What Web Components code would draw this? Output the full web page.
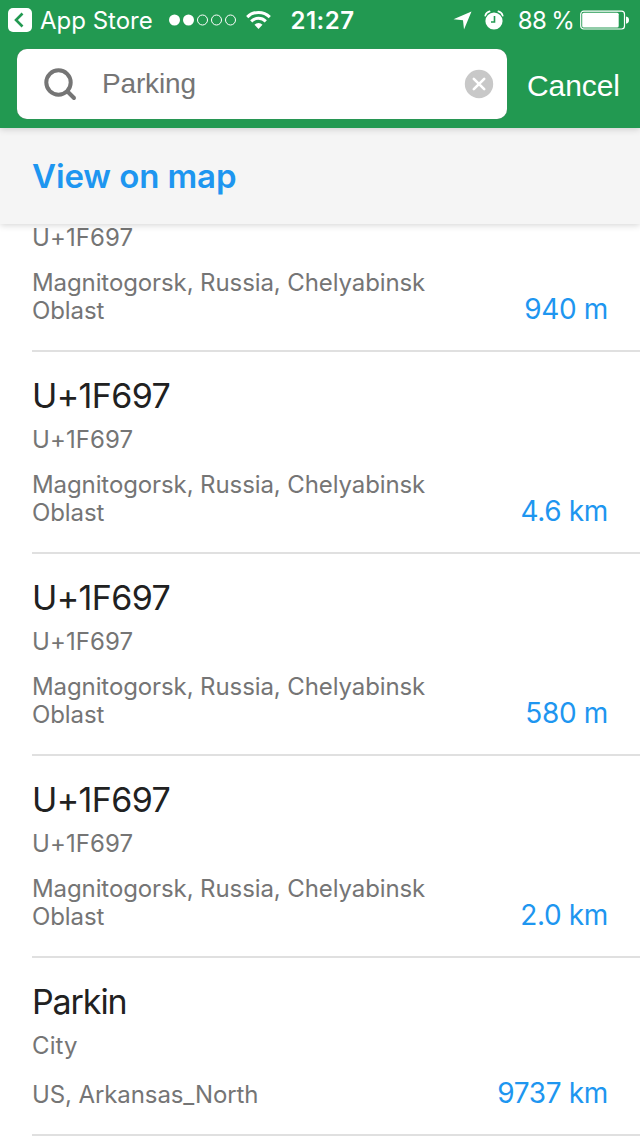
<!DOCTYPE html>
<html lang="en">
<head>
<meta charset="utf-8">
<meta name="viewport" content="width=640">
<title>Search results</title>
<style>
  body {
    margin: 0;
    background: #fff;
    font-family: Inter, "Liberation Sans", sans-serif;
    -webkit-font-smoothing: antialiased;
  }
</style>
</head>
<body>
<search-screen></search-screen>

<script>
class StatusBar extends HTMLElement {
  connectedCallback() {
    this.attachShadow({ mode: "open" });
    this.shadowRoot.innerHTML = `
      <style>
        :host {
          display: flex;
          align-items: center;
          height: 40px;
          color: #fff;
          font-size: 24px;
          line-height: 38px;
          white-space: nowrap;
        }
        svg { display: block; flex: none; }
        span { padding-top: 2px; }
        .side { display: flex; align-items: center; flex: 1; }
        .left { padding-left: 8px; }
        .right { justify-content: flex-end; padding-right: 11px; }
        .app { margin-left: 8px; width: 112px; letter-spacing: 0; }
        .signal { margin-left: 17px; }
        .wifi { margin-left: 9px; }
        .time { font-weight: 600; letter-spacing: 0.5px; margin-left: 8px; }
        .alarm { margin-left: 12px; }
        .percent { margin-left: 14px; margin-right: 6px; word-spacing: -1px; letter-spacing: -0.7px; }
      </style>

      <div class="side left">
        <svg width="24" height="24" viewBox="0 0 24 24">
          <rect width="24" height="24" rx="5" fill="#fff"/>
          <path d="M14.500 5.500L8 12l6.500 6.500" fill="none" stroke="#229951" stroke-width="2.600"/>
        </svg>
        <span class="app">App Store</span>
        <svg class="signal" width="68" height="12" viewBox="0 0 68 12">
          <g fill="#fff">
            <circle cx="5.500" cy="6" r="5.500"/>
            <circle cx="19.500" cy="6" r="5.500"/>
          </g>
          <g fill="none" stroke="#fff">
            <circle cx="33.500" cy="6" r="5"/>
            <circle cx="47.500" cy="6" r="5"/>
            <circle cx="61.500" cy="6" r="5"/>
          </g>
        </svg>
        <svg class="wifi" width="25" height="20" viewBox="0 0 25 20">
          <g fill="none" stroke="#fff" stroke-width="3">
            <path d="M1.200 7.100a16 16 0 0 1 22.600 0"/>
            <path d="M5.200 11.400a10.300 10.300 0 0 1 14.600 0"/>
          </g>
          <path d="M12.500 19l-4-4.200a5.600 5.600 0 0 1 8 0z" fill="#fff"/>
        </svg>
      </div>

      <span class="time">21:27</span>

      <div class="side right">
        <svg width="19" height="19" viewBox="0 0 19 19">
          <path d="M18.500 0.500L11 18.500L10 9.200L0.500 8.300z" fill="#fff"/>
        </svg>
        <svg class="alarm" width="20" height="20" viewBox="0 0 20 20">
          <circle cx="10" cy="11" r="8.600" fill="#fff"/>
          <g fill="none" stroke="#fff" stroke-width="1.700" stroke-linecap="round">
            <path d="M1.300 5.600Q2.200 2.200 5.600 1.400"/>
            <path d="M18.700 5.600Q17.800 2.200 14.400 1.400"/>
          </g>
          <path d="M10.500 6v6H7" fill="none" stroke="#229951" stroke-width="1.600"/>
        </svg>
        <span class="percent">88 %</span>
        <svg width="49" height="20" viewBox="0 0 49 20">
          <rect x="0.700" y="1.200" width="43.800" height="17.800" rx="3" fill="none" stroke="#fff" stroke-width="1.200"/>
          <rect x="2.200" y="2.700" width="36.500" height="14.800" rx="1.500" fill="#fff"/>
          <path d="M46 6.500c2 0.300 3 1.500 3 3.600s-1 3.300-3 3.600z" fill="#fff"/>
        </svg>
      </div>
    `;
  }
}

class SearchField extends HTMLElement {
  connectedCallback() {
    this.attachShadow({ mode: "open" });
    this.shadowRoot.innerHTML = `
      <style>
        :host {
          display: flex;
          align-items: center;
          width: 490px;
          height: 70px;
          box-sizing: border-box;
          padding: 0 13px 0 27px;
          border-radius: 10px;
          background: #fff;
          box-shadow: 0 0 1px #6b7a70;
          font-family: "Liberation Sans", sans-serif;
          font-size: 28px;
          line-height: 36px;
          color: #757575;
        }
        svg { flex: none; }
        .query { flex: 1; margin-left: 25px; letter-spacing: -0.15px; padding-bottom: 1px; }
      </style>
      <svg width="33" height="33" viewBox="0 0 33 33">
        <circle cx="14.500" cy="14.500" r="12.200" fill="none" stroke="#757575" stroke-width="4"/>
        <path d="M23.500 23.500L30 30" stroke="#757575" stroke-width="4" stroke-linecap="round"/>
      </svg>
      <span class="query"><slot></slot></span>
      <svg width="30" height="30" viewBox="0 0 30 30">
        <circle cx="15" cy="15" r="14.200" fill="#c8c8c8"/>
        <path d="M9.800 9.800l10.400 10.400M20.200 9.800L9.800 20.200" stroke="#fff" stroke-width="2.600" stroke-linecap="round"/>
      </svg>
    `;
  }
}

class SearchHeader extends HTMLElement {
  connectedCallback() {
    this.attachShadow({ mode: "open" });
    this.shadowRoot.innerHTML = `
      <style>
        :host {
          display: block;
          height: 128px;
          background: #229951;
          box-shadow: 0 1px 7px rgba(0, 0, 0, 0.18);
          position: relative;
          z-index: 2;
        }
        .row {
          display: flex;
          align-items: center;
          padding: 9px 16px 0 17px;
        }
        .cancel {
          margin-left: 20px;
          padding-top: 4px;
          font-family: "Liberation Sans", sans-serif;
          font-size: 30px;
          line-height: 36px;
          letter-spacing: -0.1px;
          color: #fff;
        }
      </style>
      <status-bar></status-bar>
      <div class="row">
        <search-field><slot></slot></search-field>
        <span class="cancel">Cancel</span>
      </div>
    `;
  }
}

class MapLink extends HTMLElement {
  connectedCallback() {
    this.attachShadow({ mode: "open" });
    this.shadowRoot.innerHTML = `
      <style>
        :host {
          display: flex;
          align-items: center;
          height: 96px;
          padding-left: 32px;
          background: #f5f5f5;
          box-shadow: 0 1px 7px rgba(0, 0, 0, 0.18);
          position: relative;
          z-index: 1;
          color: #1e96f0;
          font-size: 33px;
          font-weight: 600;
          letter-spacing: -0.1px;
        }
      </style>
      <span><slot></slot></span>
    `;
  }
}

class ResultRow extends HTMLElement {
  connectedCallback() {
    const title = this.getAttribute("name");
    this.attachShadow({ mode: "open" });
    this.shadowRoot.innerHTML = `
      <style>
        :host {
          display: block;
          margin-left: 32px;
          padding: 24px 32px 25px 0;
          border-bottom: 2px solid #e0e0e0;
          color: #757575;
          font-size: 24px;
          line-height: 28px;
        }
        :host(:not([name])) { padding-top: 0; }
        .name {
          margin-bottom: 10px;
          color: #212121;
          font-size: 34px;
          line-height: 40px;
          letter-spacing: var(--name-spacing, -0.6px);
        }
        .kind { letter-spacing: 0.1px; }
        .place {
          display: flex;
          justify-content: space-between;
          align-items: flex-end;
          margin-top: 17px;
        }
        .address { width: 410px; letter-spacing: -0.1px; }
        .distance {
          font-size: 28px;
          line-height: 32px;
          letter-spacing: -0.35px;
          color: #1e96f0;
          white-space: nowrap;
        }
      </style>
      ${title ? `<div class="name">${title}</div>` : ""}
      <div class="kind">${this.getAttribute("kind")}</div>
      <div class="place">
        <div class="address"><slot></slot></div>
        <div class="distance">${this.getAttribute("distance")}</div>
      </div>
    `;
  }
}

class SearchScreen extends HTMLElement {
  connectedCallback() {
    this.attachShadow({ mode: "open" });
    this.shadowRoot.innerHTML = `
      <style>
        :host {
          display: flex;
          flex-direction: column;
          width: 640px;
          height: 1136px;
          overflow: hidden;
        }
        /* list is scrolled to its end, the rows sit on the bottom edge */
        .results {
          flex: 1;
          min-height: 0;
          display: flex;
          flex-direction: column;
          justify-content: flex-end;
        }
        .city { --name-spacing: -1.1px; }
      </style>
      <search-header>Parking</search-header>
      <map-link>View on map</map-link>
      <div class="results">
        <result-row kind="U+1F697" distance="940 m">Magnitogorsk, Russia, Chelyabinsk Oblast</result-row>
        <result-row name="U+1F697" kind="U+1F697" distance="4.6 km">Magnitogorsk, Russia, Chelyabinsk Oblast</result-row>
        <result-row name="U+1F697" kind="U+1F697" distance="580 m">Magnitogorsk, Russia, Chelyabinsk Oblast</result-row>
        <result-row name="U+1F697" kind="U+1F697" distance="2.0 km">Magnitogorsk, Russia, Chelyabinsk Oblast</result-row>
        <result-row class="city" name="Parkin" kind="City" distance="9737 km">US, Arkansas_North</result-row>
      </div>
    `;
  }
}

customElements.define("status-bar", StatusBar);
customElements.define("search-field", SearchField);
customElements.define("search-header", SearchHeader);
customElements.define("map-link", MapLink);
customElements.define("result-row", ResultRow);
customElements.define("search-screen", SearchScreen);
</script>
</body>
</html>
